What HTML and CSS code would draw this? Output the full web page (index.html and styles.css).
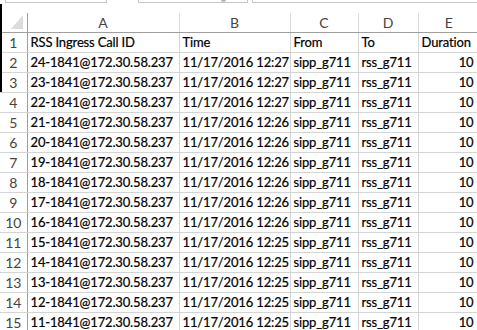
FILE: index.html
```html
<!DOCTYPE html>
<html>
<head>
    <meta charset="utf-8">
    <title>calls</title>
    <link rel="stylesheet" href="styles.css">
</head>
<body>
    <div class="tabs">
        <div class="tab tab1"></div>
        <div class="tab tab2"><span class="knob"></span></div>
        <div class="tab tab3"></div>
    </div>
    <div class="edge"></div>

    <table class="sheet">
        <colgroup>
            <col class="c_num">
            <col class="c_a">
            <col class="c_b">
            <col class="c_c">
            <col class="c_d">
            <col class="c_e">
        </colgroup>
        <thead>
            <tr>
                <th class="corner"><span class="tri"></span></th>
                <th>A</th>
                <th>B</th>
                <th>C</th>
                <th>D</th>
                <th>E</th>
            </tr>
        </thead>
        <tbody id="rows">
            <tr>
                <td class="num">1</td>
                <td>RSS Ingress Call ID</td>
                <td>Time</td>
                <td>From</td>
                <td>To</td>
                <td>Duration</td>
            </tr>
        </tbody>
    </table>

    <script>
        // build the data rows
        const times = ['12:27', '12:27', '12:27', '12:26', '12:26', '12:26', '12:26', '12:26', '12:26', '12:25', '12:25', '12:25', '12:25', '12:25'];
        const rows = document.getElementById('rows');
        for (let i = 0; i < times.length; i++) {
            const id = 24 - i;
            rows.innerHTML += `
                <tr>
                    <td class="num">${i + 2}</td>
                    <td>${id}-1841@172.30.58.237</td>
                    <td>11/17/2016 ${times[i]}</td>
                    <td>sipp_g711</td>
                    <td>rss_g711</td>
                    <td class="val">10</td>
                </tr>
            `;
        }
    </script>
</body>
</html>
```

FILE: styles.css
```css
body {
    margin: 0;
    background-color: #ffffff;
    font-family: "Lato", "Liberation Sans", sans-serif;
    font-size: 13px;
    overflow: hidden;
}

.tabs {
    display: flex;
    height: 3px;
    margin-bottom: 10px;
}
.tab {
    border: 1px solid #c6c6c6;
    border-top: none;
    height: 2px;
    position: relative;
}
.tab1 {
    margin-left: 5px;
    width: 100px;
}
.tab2 {
    margin-left: 31px;
    width: 108px;
}
.tab3 {
    margin-left: 4px;
    flex: 1;
    border-right: none;
}
.knob {
    position: absolute;
    left: 82px;
    top: -2px;
    width: 5px;
    height: 4px;
    border-radius: 50%;
    background-color: #b5b5b5;
}

.edge {
    position: absolute;
    left: 0;
    top: 4px;
    width: 2px;
    height: 88px;
    background-color: #000000;
}

.sheet {
    border-collapse: collapse;
    table-layout: fixed;
    width: 479px;
}
.c_num { width: 27px; }
.c_a { width: 152px; }
.c_b { width: 111px; }
.c_c { width: 68px; }
.c_d { width: 60px; }
.c_e { width: 61px; }

th {
    height: 19px;
    padding: 0;
    font-size: 14px;
    font-weight: normal;
    color: #444444;
    text-align: center;
    border-left: 1px solid #dadada;
    border-bottom: 1px solid #9f9f9f;
}
th.corner {
    border-left: none;
    border-right: 1px solid #9f9f9f;
    position: relative;
}
.tri {
    position: absolute;
    left: 11px;
    top: 2px;
    width: 0;
    height: 0;
    border-left: 12px solid transparent;
    border-bottom: 14px solid #dcdcdc;
}

td {
    height: 19px;
    padding: 0 0 0 3px;
    border: 1px solid #d4d4d4;
    white-space: nowrap;
    overflow: hidden;
    color: #000000;
    line-height: 19px;
    letter-spacing: -0.15px;
    -webkit-text-stroke: 0.2px #000000;
}
td.num {
    padding: 0;
    text-align: center;
    font-size: 14px;
    color: #444444;
    letter-spacing: 0;
    -webkit-text-stroke: 0;
    border-left: none;
    border-right: 1px solid #9f9f9f;
}
td.val {
    text-align: right;
    padding: 0 5px 0 0;
}
```
